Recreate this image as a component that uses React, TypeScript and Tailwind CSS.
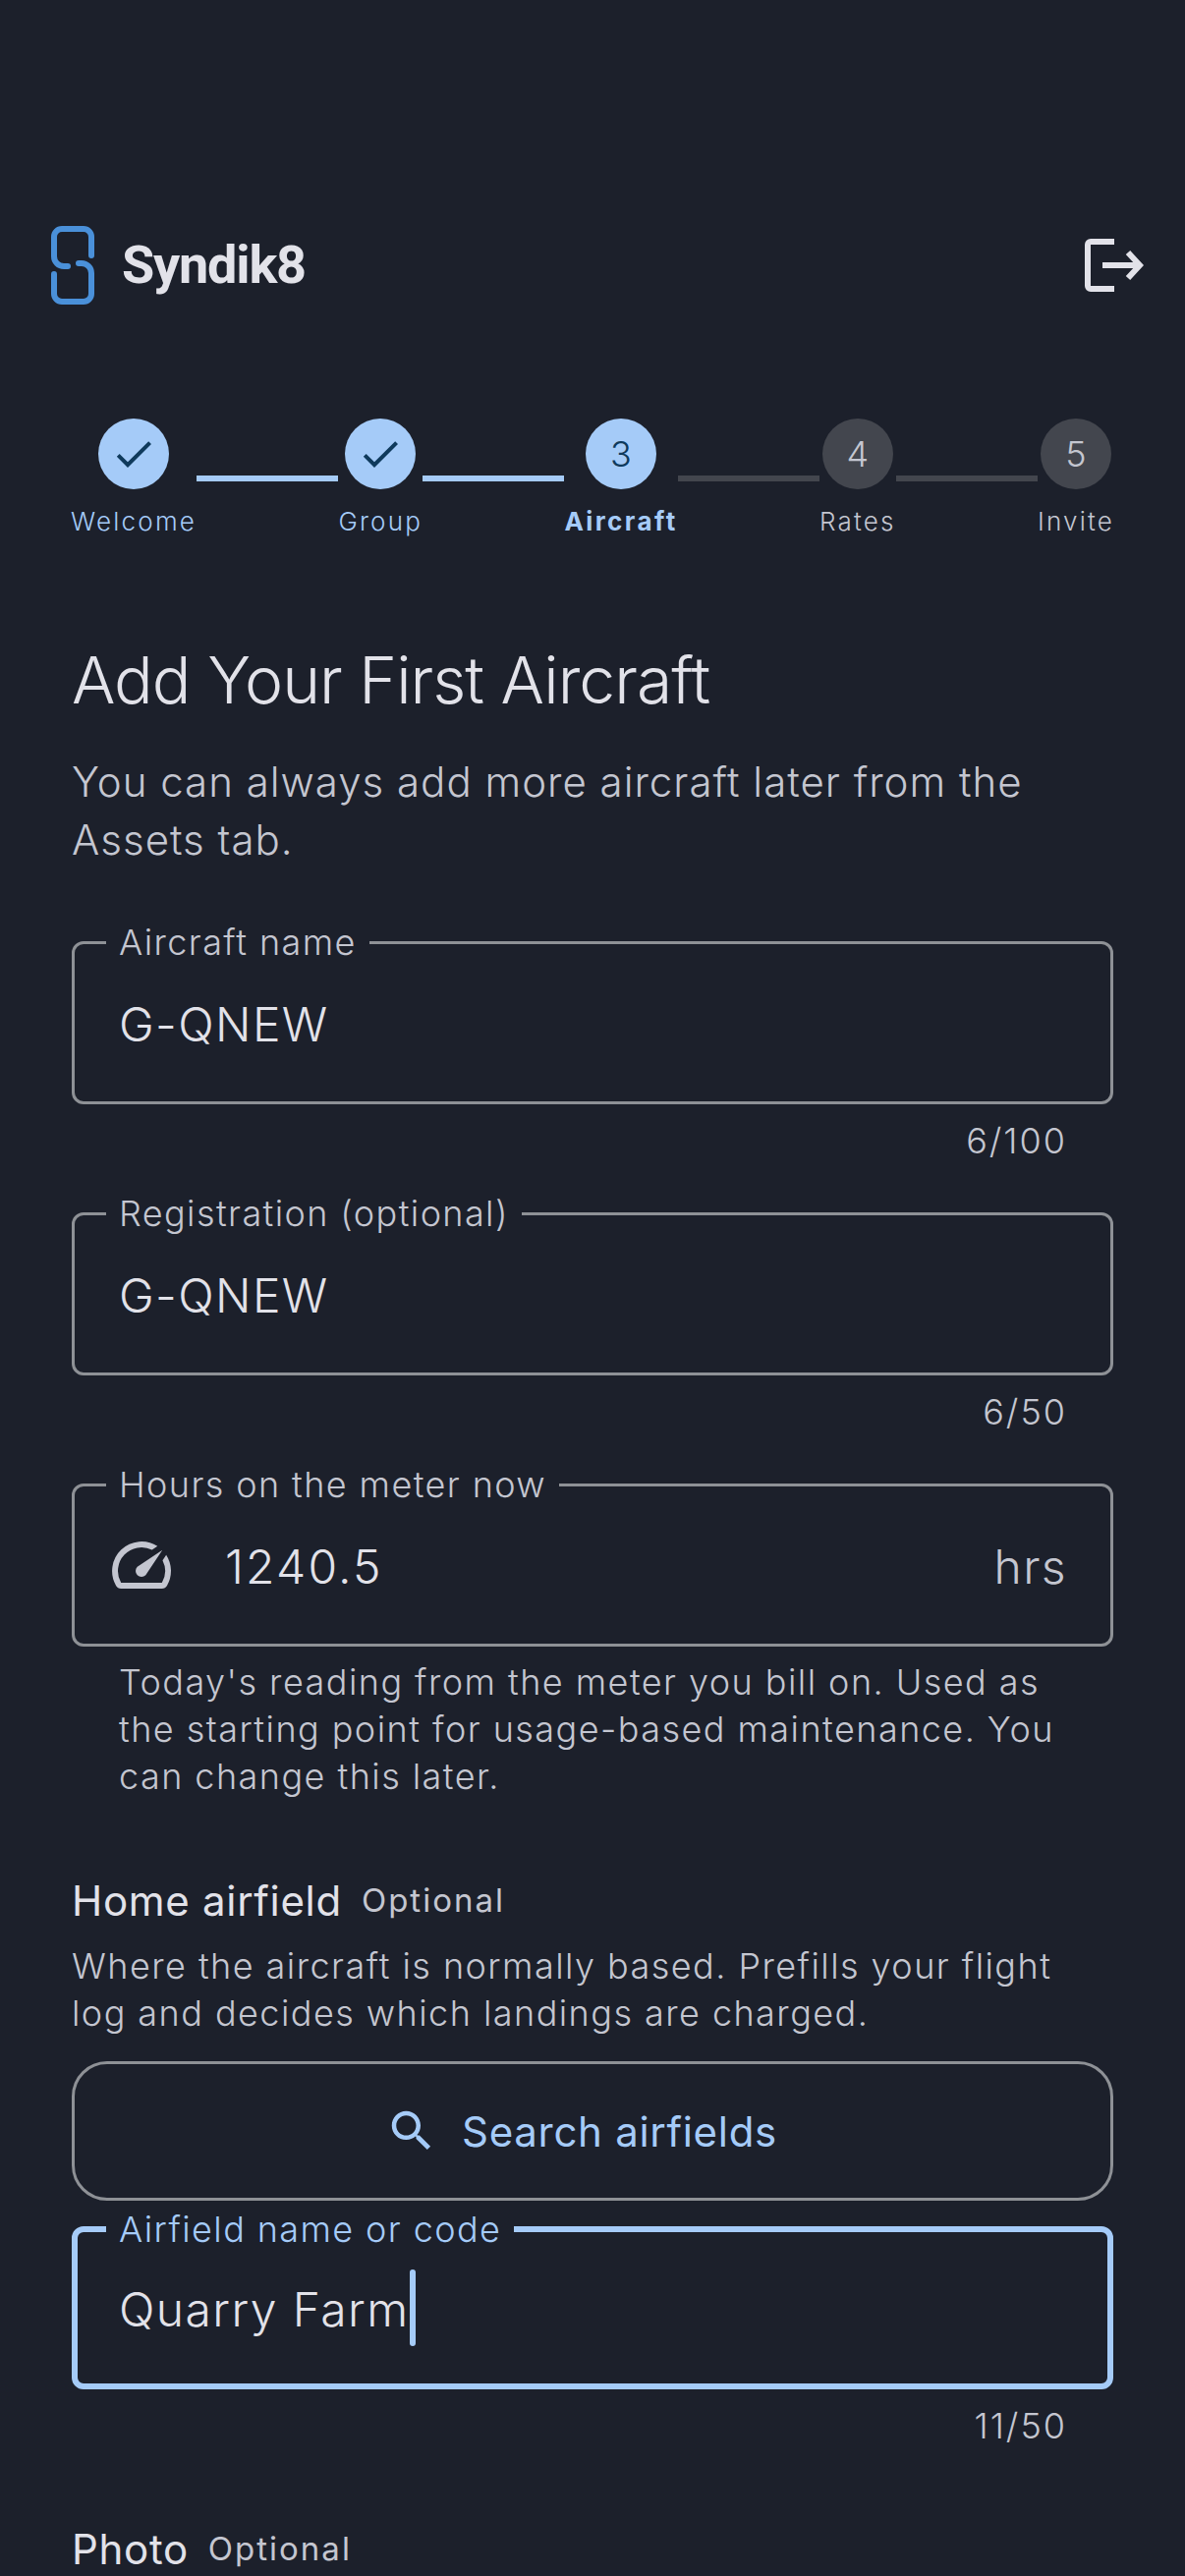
import React from "react";

const bg = "bg-[#1c202b]";

const Check = () => (
  <svg width="48" height="48" viewBox="0 0 24 24" fill="#0f3a5c">
    <path d="M9 16.17L4.83 12l-1.42 1.41L9 19 21 7l-1.41-1.41z" />
  </svg>
);

const Step = ({ n, label, state }: { n: number; label: string; state: "done" | "active" | "todo" }) => (
  <div className="flex flex-col items-center">
    <div
      className={`flex h-[72px] w-[72px] items-center justify-center rounded-full text-[36px] font-light leading-none ${
        state === "todo" ? "bg-[#43464e] text-[#c4c6d0]" : "bg-[#a5cbf8] text-[#0f3a5c]"
      }`}
    >
      {state === "done" ? <Check /> : n}
    </div>
    <div
      className={`mt-[15px] whitespace-nowrap text-[26px] leading-[36px] ${
        state === "active"
          ? "font-bold tracking-[2.4px] text-[#a5cbf8]"
          : state === "done"
            ? "font-light tracking-[2.2px] text-[#a5cbf8]"
            : "font-light tracking-[2.2px] text-[#c4c6d0]"
      }`}
    >
      {label}
    </div>
  </div>
);

const Line = ({ on }: { on?: boolean }) => (
  <div className={`mt-[58px] h-[6px] flex-1 ${on ? "bg-[#a5cbf8]" : "bg-[#43464e]"}`} />
);

const Field = ({
  label,
  children,
  focused,
}: {
  label: string;
  children: React.ReactNode;
  focused?: boolean;
}) => (
  <div
    className={`relative flex h-[166px] items-center rounded-[12px] ${
      focused ? "border-[6px] border-[#a5cbf8] pl-[42px]" : "border-[3px] border-[#8e9196] pl-[45px]"
    }`}
  >
    <span
      className={`absolute whitespace-nowrap px-[13px] text-[36px] font-light leading-[40px] tracking-[1.4px] ${bg} ${
        focused ? "-top-[23px] left-[29px] text-[#a5cbf8]" : "-top-[22px] left-[32px] text-[#c4c6d0]"
      }`}
    >
      {label}
    </span>
    {children}
  </div>
);

const Value = ({ children, wide }: { children: React.ReactNode; wide?: boolean }) => (
  <span
    className={`mt-[3px] text-[48px] font-light leading-[60px] text-[#e2e2e9] ${
      wide ? "tracking-[2.2px]" : "tracking-[1.4px]"
    }`}
  >
    {children}
  </span>
);

const Counter = ({ children }: { children: React.ReactNode }) => (
  <div className="mt-[17px] pr-[47px] text-right text-[36px] font-light leading-[40px] tracking-[2px] text-[#c4c6d0]">
    {children}
  </div>
);

export default function App() {
  return (
    <div className={`h-[2622px] w-[1206px] overflow-hidden ${bg} font-['Inter',sans-serif]`}>
      <header className="flex h-[310px] items-end justify-between pl-[52px] pr-[42px]">
        <div className="flex h-[80px] items-center gap-[28px]">
          <svg width="44" height="80" viewBox="0 0 44 80" fill="none" stroke="#4a90d9" strokeWidth="6" strokeLinecap="round">
            <path d="M41 30V11a8 8 0 0 0-8-8H11a8 8 0 0 0-8 8V31a10 10 0 0 0 10 10H17" />
            <path d="M28 38H31a10 10 0 0 1 10 10V69a8 8 0 0 1-8 8H11a8 8 0 0 1-8-8V49" />
          </svg>
          <span className="font-['Roboto',sans-serif] text-[54px] font-bold leading-none tracking-[-1.2px] text-[#e2e2e9]">Syndik8</span>
        </div>
        <svg className="mb-[13px]" width="60" height="54" viewBox="0 0 60 54" fill="none" stroke="#e2e2e9" strokeWidth="6">
          <path d="M30 3H6a3 3 0 0 0-3 3V48a3 3 0 0 0 3 3H30" />
          <path d="M18 27H56" />
          <path d="M44 14L56 27L44 40" />
        </svg>
      </header>

      <div className="flex px-[72px] pt-[116px]">
        <Step n={1} label="Welcome" state="done" />
        <Line on />
        <Step n={2} label="Group" state="done" />
        <Line on />
        <Step n={3} label="Aircraft" state="active" />
        <Line />
        <Step n={4} label="Rates" state="todo" />
        <Line />
        <Step n={5} label="Invite" state="todo" />
      </div>

      <main className="px-[73px]">
        <h1 className="mt-[103px] text-[66px] font-light leading-[80px] tracking-[-1px] text-[#e2e2e9]">
          Add Your First Aircraft
        </h1>
        <p className="mt-[34px] text-[42px] font-light leading-[59px] tracking-[1px] text-[#c4c6d0]">
          You can always add more aircraft later from the Assets tab.
        </p>

        <div className="mt-[74px]">
          <Field label="Aircraft name">
            <Value>G-QNEW</Value>
          </Field>
          <Counter>6/100</Counter>
        </div>

        <div className="mt-[53px]">
          <Field label="Registration (optional)">
            <Value>G-QNEW</Value>
          </Field>
          <Counter>6/50</Counter>
        </div>

        <div className="mt-[53px]">
          <Field label="Hours on the meter now">
            <svg className="-ml-[13px] shrink-0" width="72" height="72" viewBox="0 0 24 24" fill="#c4c6d0">
              <path d="M20.38 8.57l-1.23 1.85a8 8 0 0 1-.22 7.58H5.07A8 8 0 0 1 15.58 6.85l1.85-1.23A10 10 0 0 0 3.35 19a2 2 0 0 0 1.72 1h13.85a2 2 0 0 0 1.74-1 10 10 0 0 0-.27-10.44zm-9.79 6.84a2 2 0 0 0 2.83 0l5.66-8.49-8.49 5.66a2 2 0 0 0 0 2.83z" />
            </svg>
            <span className="ml-[49px] flex">
              <Value wide>1240.5</Value>
            </span>
            <span className="ml-auto mt-[3px] pr-[44px] text-[48px] font-light leading-[60px] tracking-[1.4px] text-[#c4c6d0]">hrs</span>
          </Field>
          <p className="mt-[12px] px-[48px] text-[36px] font-light leading-[48px] tracking-[1.45px] text-[#c4c6d0]">
            Today's reading from the meter you bill on. Used as the starting point for usage-based maintenance. You can change this later.
          </p>
        </div>

        <div className="mt-[73px] flex items-center gap-[20px]">
          <span className="text-[42px] leading-[60px] tracking-[.7px] text-[#e2e2e9]">Home airfield</span>
          <span className="text-[33px] tracking-[2px] text-[#c4c6d0]">Optional</span>
        </div>
        <p className="mt-[12px] pr-[30px] text-[36px] font-light leading-[48px] tracking-[1.45px] text-[#c4c6d0]">
          Where the aircraft is normally based. Prefills your flight log and decides which landings are charged.
        </p>

        <button className="mt-[25px] flex h-[142px] w-full items-center justify-center gap-[24px] rounded-[36px] border-[3px] border-[#8e9196] pr-[23px] text-[42px] font-normal tracking-[.7px] text-[#a5cbf8]">
          <svg width="54" height="54" viewBox="0 0 24 24" fill="#a5cbf8">
            <path d="M15.5 14h-.79l-.28-.27C15.41 12.59 16 11.11 16 9.5 16 5.91 13.09 3 9.5 3S3 5.91 3 9.5 5.91 16 9.5 16c1.61 0 3.09-.59 4.23-1.57l.27.28v.79l5 4.99L20.49 19l-4.99-5zm-6 0C7.01 14 5 11.99 5 9.5S7.01 5 9.5 5 14 7.01 14 9.5 11.99 14 9.5 14z" />
          </svg>
          Search airfields
        </button>

        <div className="mt-[26px]">
          <Field label="Airfield name or code" focused>
            <Value>Quarry Farm</Value>
            <span className="h-[78px] w-[6px] rounded-full bg-[#a5cbf8]" />
          </Field>
          <Counter>11/50</Counter>
        </div>

        <div className="mt-[76px] flex items-center gap-[20px]">
          <span className="text-[42px] leading-[60px] tracking-[.7px] text-[#e2e2e9]">Photo</span>
          <span className="text-[33px] tracking-[2px] text-[#c4c6d0]">Optional</span>
        </div>
      </main>
    </div>
  );
}
